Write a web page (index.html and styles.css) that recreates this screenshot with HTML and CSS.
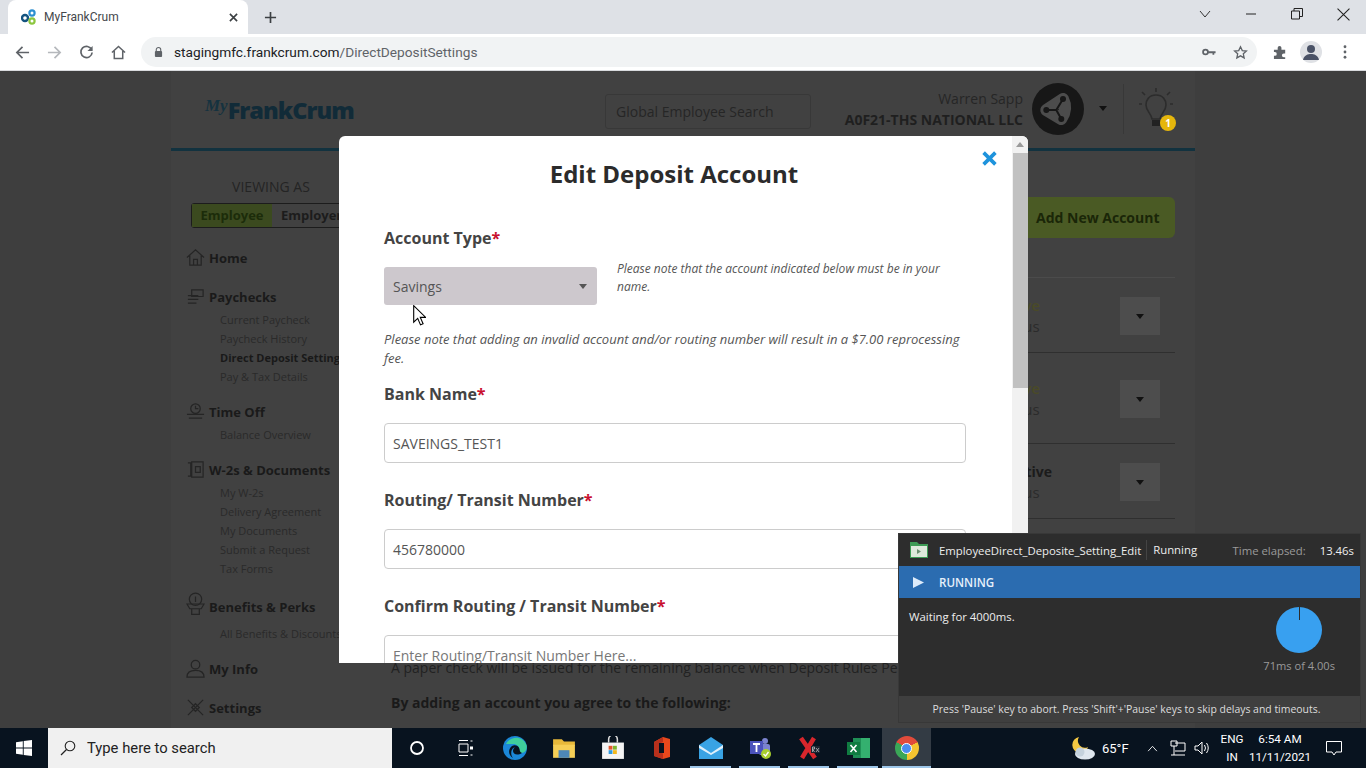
FILE: index.html
```html
<!DOCTYPE html>
<html lang="en">
<head>
<meta charset="utf-8">
<title>MyFrankCrum</title>
<link rel="stylesheet" href="styles.css">
</head>
<body>
<div class="screen">
  <div class="tabbar">
    <div class="tab">
      <svg class="favicon" viewBox="0 0 16 16"><circle cx="4" cy="9" r="3" fill="none" stroke="#14537f" stroke-width="2.4"/><circle cx="11" cy="4" r="2.6" fill="none" stroke="#2d8fd0" stroke-width="2.2"/><circle cx="11" cy="12" r="2.6" fill="none" stroke="#8cc63f" stroke-width="2.2"/></svg>
      <span class="tab-title">MyFrankCrum</span>
      <svg class="tab-close" viewBox="0 0 10 10"><path d="M1 1l8 8M9 1l-8 8" stroke="#3c4043" stroke-width="1.8"/></svg>
    </div>
    <svg class="new-tab" viewBox="0 0 14 14"><path d="M7 1v12M1 7h12" stroke="#3c4043" stroke-width="1.8"/></svg>
    <div class="win-controls">
      <svg class="wc wc-tabs" viewBox="0 0 12 12"><path d="M1 3l5 6 5-6" fill="none" stroke="#333" stroke-width="1"/></svg>
      <svg class="wc wc-min" viewBox="0 0 12 12"><path d="M1 6h10" stroke="#222" stroke-width="1"/></svg>
      <svg class="wc wc-max" viewBox="0 0 12 12"><path d="M.5 3h8v8h-8zM3 3V.5h8.500v8H8.500" fill="none" stroke="#222" stroke-width="1"/></svg>
      <svg class="wc wc-close" viewBox="0 0 12 12"><path d="M.5.500l11 11M11.500.500l-11 11" stroke="#222" stroke-width="1"/></svg>
    </div>
  </div>
  <div class="toolbar">
    <svg class="tb-icon tb-back" viewBox="0 0 16 16"><path d="M15 8H2M8 2L2 8l6 6" fill="none" stroke="#5f6368" stroke-width="1.800"/></svg>
    <svg class="tb-icon tb-fwd" viewBox="0 0 16 16"><path d="M1 8h13M8 2l6 6-6 6" fill="none" stroke="#b5b8bc" stroke-width="1.800"/></svg>
    <svg class="tb-icon tb-reload" viewBox="0 0 16 16"><path d="M13.500 5A6 6 0 1 0 14 8" fill="none" stroke="#5f6368" stroke-width="1.800"/><path d="M14.500 1v5.500H9z" fill="#5f6368"/></svg>
    <svg class="tb-icon tb-home" viewBox="0 0 16 16"><path d="M1 8l7-6.500L15 8M3.500 6.500V14.500h9V6.500" fill="none" stroke="#5f6368" stroke-width="1.600"/></svg>
    <div class="omnibox">
      <svg class="lock" viewBox="0 0 10 12"><path d="M2.500 5V3.500a2.500 2.500 0 0 1 5 0V5" fill="none" stroke="#5f6368" stroke-width="1.200"/><rect x="1" y="5" width="8" height="6.500" rx="1" fill="#5f6368"/></svg>
      <span class="url"><span class="url-host">stagingmfc.frankcrum.com</span>/DirectDepositSettings</span>
      <svg class="key" viewBox="0 0 16 10"><circle cx="4" cy="5" r="2.800" fill="none" stroke="#5f6368" stroke-width="2"/><path d="M7 4h8.500v2.500h-1.500v1.500h-2V6.500H7z" fill="#5f6368"/></svg>
      <svg class="star" viewBox="0 0 16 16"><path d="M8 1.800l1.900 4.100 4.400.5-3.300 3 .9 4.400L8 11.600l-3.900 2.200.9-4.400-3.300-3 4.400-.5z" fill="none" stroke="#5f6368" stroke-width="1.400"/></svg>
    </div>
    <svg class="puzzle" viewBox="0 0 16 16"><path d="M1 5h4V3a2 2 0 0 1 4 0v2h4v4h-1.500a2 2 0 0 0 0 4H13v2H1v-3.500h1a2 2 0 0 0 0-4H1z" fill="#5f6368"/></svg>
    <div class="profile"><svg viewBox="0 0 22 22"><circle cx="11" cy="8" r="4" fill="#4a5266"/><path d="M3 19c1-5 5-6 8-6s7 1 8 6z" fill="#4a5266"/></svg></div>
    <svg class="menu" viewBox="0 0 4 16"><circle cx="2" cy="2" r="1.600" fill="#5f6368"/><circle cx="2" cy="8" r="1.600" fill="#5f6368"/><circle cx="2" cy="14" r="1.600" fill="#5f6368"/></svg>
  </div>

  <div class="viewport">
    <div class="site">
      <header class="site-header">
        <div class="logo"><span class="logo-my">My</span><span class="logo-name">FrankCrum</span></div>
        <div class="global-search">Global Employee Search</div>
        <div class="user">
          <div class="user-name">Warren Sapp</div>
          <div class="user-company">A0F21-THS NATIONAL LLC</div>
        </div>
        <svg class="avatar" viewBox="0 0 52 52"><circle cx="26" cy="26" r="26" fill="#171717"/><path d="M14.300 27L31 16M14.300 27L29.300 36M31 16Q36 26 29.300 36" stroke="#4c4c4c" stroke-width="12" fill="none" stroke-linecap="round" stroke-linejoin="round"/><path d="M14.300 27H24.300L31 16M24.300 27L29.300 36" stroke="#171717" stroke-width="2" fill="none"/><g fill="#171717"><circle cx="14.300" cy="27" r="3"/><circle cx="31" cy="16" r="3"/><circle cx="29.300" cy="36" r="3"/></g></svg>
        <span class="caret caret-user"></span>
        <span class="header-rule"></span>
        <svg class="bulb" viewBox="0 0 36 44"><g fill="none" stroke="#2c2c2c" stroke-width="1.600"><path d="M18 8c-7 0-10 5-10 10 0 6 5 8 6 14h8c1-6 6-8 6-14 0-5-3-10-10-10z"/><path d="M18 1v4M4 5l3 3M32 5l-3 3M1 17h3M32 17h3"/></g><rect x="14" y="33" width="8" height="6" fill="#222"/></svg>
        <span class="badge">1</span>
      </header>
      <div class="site-body">
        <aside class="sidebar">
          <div class="viewing">VIEWING AS</div>
          <div class="toggle"><span class="toggle-on">Employee</span><span class="toggle-off">Employer</span></div>
          <nav class="nav">
            <div class="nav-head nav-home"><svg class="nav-icon" viewBox="0 0 20 20"><path d="M1 10l9-8 9 8M4 8v10h12V8M8 18v-6h4v6" fill="none" stroke="#252525" stroke-width="1.300"/></svg>Home</div>
            <div class="nav-head nav-pay"><svg class="nav-icon" viewBox="0 0 20 20"><path d="M6 3h12v7H6zM2 9h11M2 13h11M2 17h9" fill="none" stroke="#252525" stroke-width="1.300"/></svg>Paychecks</div>
            <a class="nav-sub">Current Paycheck</a>
            <a class="nav-sub">Paycheck History</a>
            <a class="nav-sub nav-current">Direct Deposit Settings</a>
            <a class="nav-sub">Pay &amp; Tax Details</a>
            <div class="nav-head nav-time"><svg class="nav-icon" viewBox="0 0 20 20"><circle cx="10" cy="7" r="5" fill="none" stroke="#252525" stroke-width="1.300"/><path d="M1 13h18M3 17h14M10 4v3h3" fill="none" stroke="#252525" stroke-width="1.300"/></svg>Time Off</div>
            <a class="nav-sub">Balance Overview</a>
            <div class="nav-head nav-w2"><svg class="nav-icon" viewBox="0 0 20 20"><path d="M2 3h3v14H2M6 2h12v16H6zM10 7h5v6h-5z" fill="none" stroke="#252525" stroke-width="1.300"/></svg>W-2s &amp; Documents</div>
            <a class="nav-sub">My W-2s</a>
            <a class="nav-sub">Delivery Agreement</a>
            <a class="nav-sub">My Documents</a>
            <a class="nav-sub">Submit a Request</a>
            <a class="nav-sub">Tax Forms</a>
            <div class="nav-head nav-ben"><svg class="nav-icon nav-icon-tall" viewBox="0 0 20 26"><circle cx="10" cy="8" r="6.500" fill="none" stroke="#252525" stroke-width="1.300"/><path d="M1 13h18l-3 5H4zM6 18v6h8v-6M10 5v6" fill="none" stroke="#252525" stroke-width="1.300"/></svg>Benefits &amp; Perks</div>
            <a class="nav-sub nav-sub-ben">All Benefits &amp; Discounts</a>
            <div class="nav-head nav-info"><svg class="nav-icon" viewBox="0 0 20 20"><circle cx="10" cy="6" r="4.500" fill="none" stroke="#252525" stroke-width="1.300"/><path d="M1 19c0-5 4-7 9-7s9 2 9 7z" fill="none" stroke="#252525" stroke-width="1.300"/></svg>My Info</div>
            <div class="nav-head nav-set"><svg class="nav-icon" viewBox="0 0 20 20"><path d="M2 2l16 16M18 2L2 18M10 6l4 4-4 4-4-4z" fill="none" stroke="#252525" stroke-width="1.300"/></svg>Settings</div>
          </nav>
        </aside>
        <main class="main">
          <div class="main-actions"><span class="add-btn">Add New Account</span></div>
          <div class="acct-list">
            <div class="acct acct-1"><div class="acct-text"><div class="acct-state">Active</div><div class="acct-status">Status</div></div><span class="acct-btn"><span class="caret"></span></span></div>
            <div class="acct acct-2"><div class="acct-text"><div class="acct-state">Active</div><div class="acct-status">Status</div></div><span class="acct-btn"><span class="caret"></span></span></div>
            <div class="acct acct-3"><div class="acct-text"><div class="acct-state acct-inactive">Inactive</div><div class="acct-status">Status</div></div><span class="acct-btn"><span class="caret"></span></span></div>
          </div>
          <p class="paper">A paper check will be issued for the remaining balance when Deposit Rules Per Paycheck are not met.</p>
          <p class="agree">By adding an account you agree to the following:</p>
        </main>
      </div>
    </div>

    <div class="modal">
      <div class="modal-body">
        <h1 class="modal-title">Edit Deposit Account</h1>
        <svg class="modal-close" viewBox="0 0 14 14"><path d="M1.500 1.500l11 11M12.500 1.500l-11 11" stroke="#1e93dc" stroke-width="3.400"/></svg>
        <div class="label label-type">Account Type<span class="req">*</span></div>
        <div class="type-row">
          <div class="select">Savings<span class="caret caret-select"></span></div>
          <p class="note note-side">Please note that the account indicated below must be in your name.</p>
        </div>
        <p class="note note-full">Please note that adding an invalid account and/or routing number will result in a $7.00 reprocessing fee.</p>
        <div class="label">Bank Name<span class="req">*</span></div>
        <div class="input">SAVEINGS_TEST1</div>
        <div class="label">Routing/ Transit Number<span class="req">*</span></div>
        <div class="input">456780000</div>
        <div class="label">Confirm Routing / Transit Number<span class="req">*</span></div>
        <div class="input input-ph">Enter Routing/Transit Number Here...</div>
      </div>
      <div class="scrollbar">
        <svg class="sb-up" viewBox="0 0 8 5"><path d="M4 0l4 5H0z" fill="#9a9a9a"/></svg>
        <div class="sb-thumb"></div>
      </div>
    </div>

    <svg class="cursor" viewBox="0 0 13 21"><path d="M.700.700v16.500l4-3.800 2.800 6.500 2.600-1.100-2.800-6.400h5.400z" fill="#fff" stroke="#000" stroke-width="1.100"/></svg>

    <section class="runner">
      <div class="run-title">
        <svg class="run-icon" viewBox="0 0 18 16"><path d="M0 0h7l2 2h9v14H0z" fill="#3e9b55"/><rect x="1" y="4" width="16" height="11" fill="#dfe9dc"/><path d="M7 7l4 2.500L7 12z" fill="#6d8f72"/></svg>
        <span class="run-name">EmployeeDirect_Deposite_Setting_Edit</span>
        <span class="run-state">Running</span>
        <span class="run-elapsed">Time elapsed:</span>
        <span class="run-time">13.46s</span>
      </div>
      <div class="run-bar"><svg class="run-play" viewBox="0 0 12 12"><path d="M0 0l12 6-12 6z" fill="#dcebfa"/></svg>RUNNING</div>
      <div class="run-body">
        <div class="run-msg">Waiting for 4000ms.</div>
        <div class="run-progress">
          <div class="pie"></div>
          <div class="pie-label">71ms of 4.00s</div>
        </div>
      </div>
      <div class="run-foot">Press 'Pause' key to abort. Press 'Shift'+'Pause' keys to skip delays and timeouts.</div>
    </section>
  </div>

  <footer class="taskbar">
    <div class="start"><svg viewBox="0 0 16 16"><path d="M0 2.200L6.800 1.200V7.500H0zM7.700 1.100L16 0v7.500H7.700zM0 8.400h6.800v6.400L0 13.800zM7.700 8.400H16V16l-8.300-1.100z" fill="#fff"/></svg></div>
    <div class="search">
      <svg class="search-icon" viewBox="0 0 16 16"><circle cx="10" cy="6" r="4.800" fill="none" stroke="#222" stroke-width="1.100"/><path d="M6.500 9.500L1 15" stroke="#222" stroke-width="1.200"/></svg>
      <span>Type here to search</span>
    </div>
    <div class="tasks">
      <div class="task"><svg class="ti" viewBox="0 0 16 16"><circle cx="8" cy="8" r="6" fill="none" stroke="#fff" stroke-width="1.800"/></svg></div>
      <div class="task"><svg class="ti" viewBox="0 0 16 16"><path d="M1 .500h9M1 15.500h9M1 4h9v8H1zM12.500 1h2M12.500 15h2" fill="none" stroke="#fff" stroke-width="1"/><rect x="12" y="6.500" width="3" height="3" fill="#fff"/></svg></div>
      <div class="task"><svg class="ti ti-big" viewBox="0 0 24 24"><circle cx="12" cy="12" r="12" fill="#1b87d8"/><path d="M3 8C6 1 19-2 23.500 9c1 5-1.500 8-5 8-2 0-3-1-3-2 2-3-1-7-5-7-3 0-6 0-7.500 0z" fill="#3fcf9c"/><path d="M10 22c-5-3-5-9-1-12 3-2 7 0 7.500 3 .3 2 .5 3 2.500 4-5 3-9 1-9-2 0-2 1-3 2-3.500-4 0-5 7-2 10.500z" fill="#08131f"/></svg></div>
      <div class="task"><svg class="ti ti-big" viewBox="0 0 22 22"><path d="M1 3h8l2 2h10v4H1z" fill="#e8b93a"/><rect x="1" y="8" width="20" height="12" fill="#f6cf56"/><rect x="6" y="13" width="10" height="7" fill="#4d87b8"/></svg></div>
      <div class="task"><svg class="ti ti-big" viewBox="0 0 22 22"><path d="M7 6V3a4 4 0 0 1 8 0v3" fill="none" stroke="#ddd" stroke-width="1.400"/><rect x="1" y="6" width="20" height="15" fill="#f4f4f4"/><rect x="7" y="9" width="3.500" height="3.500" fill="#e2552c"/><rect x="11" y="9" width="3.500" height="3.500" fill="#7cb52e"/><rect x="7" y="13" width="3.500" height="3.500" fill="#2f9ae0"/><rect x="11" y="13" width="3.500" height="3.500" fill="#f3b81c"/></svg></div>
      <div class="task"><svg class="ti ti-big" viewBox="0 0 24 24"><path d="M13 1l7 2v18l-7 2-9-3V6z" fill="#e8481c"/><path d="M4 6l9-5v5L9 8v8l4 1.500V23l-9-3z" fill="#b8301c"/><rect x="9" y="7" width="5" height="10" fill="#08131f"/></svg></div>
      <div class="task task-open"><svg class="ti ti-big" viewBox="0 0 24 22"><path d="M0 8l12-8 12 8v14H0z" fill="#39a3e4"/><path d="M0 8l12 8 12-8v3l-12 7-12-7z" fill="#dff0fb"/></svg></div>
      <div class="task task-open"><svg class="ti ti-big" viewBox="0 0 24 24"><circle cx="17" cy="5" r="3" fill="#7b83cf"/><rect x="11" y="8" width="11" height="11" rx="2" fill="#7b83cf"/><rect x="2" y="5" width="13" height="13" fill="#4b53bc"/><path d="M5 8h7M8.500 8v8" stroke="#fff" stroke-width="1.800"/><circle cx="18" cy="18" r="5" fill="#a8cf2e"/><path d="M15.500 18l2 2 3-4" fill="none" stroke="#fff" stroke-width="1.300"/></svg></div>
      <div class="task task-open"><svg class="ti ti-big" viewBox="0 0 24 24"><path d="M4 2l14 20M17 2L5 22" stroke="#d8262c" stroke-width="4.500"/><rect x="14" y="10" width="9" height="7" fill="#1b2430"/><path d="M15.500 11v5M15.500 11h2v2h-2l2 3M19 12l3 4M22 12l-3 4" stroke="#bbb" stroke-width=".8" fill="none"/></svg></div>
      <div class="task task-open"><svg class="ti ti-big" viewBox="0 0 24 24"><rect x="7" y="2" width="17" height="20" fill="#1f8f56"/><rect x="15" y="2" width="9" height="20" fill="#34b06f"/><rect x="1" y="6" width="13" height="13" fill="#107c41"/><path d="M4.500 9l6 7M10.500 9l-6 7" stroke="#fff" stroke-width="1.600"/></svg></div>
      <div class="task task-open task-active"><div class="chrome"><div class="chrome-dot"></div></div></div>
    </div>
    <div class="tray">
      <svg class="weather" viewBox="0 0 26 24"><path d="M9 1a8 8 0 1 0 9 10A7 7 0 0 1 9 1z" fill="#f5c842"/><ellipse cx="15" cy="18" rx="10" ry="5.500" fill="#dfe7ef"/><circle cx="10" cy="16" r="4.500" fill="#c5d2dd"/></svg>
      <span class="temp">65°F</span>
      <svg class="tray-i tray-chev" viewBox="0 0 12 8"><path d="M1 7l5-5.500L11 7" fill="none" stroke="#fff" stroke-width="1"/></svg>
      <svg class="tray-i tray-net" viewBox="0 0 16 16"><path d="M1 1h6v5H1zM4 6v9M1 15h14M5 3h10v8H5" fill="none" stroke="#fff" stroke-width="1"/></svg>
      <svg class="tray-i tray-vol" viewBox="0 0 16 16"><path d="M1 6h3l4-4v12l-4-4H1zM10.500 5q2 3 0 6M12.500 3q3.500 5 0 10" fill="none" stroke="#fff" stroke-width="1"/></svg>
      <div class="lang"><div>ENG</div><div>IN</div></div>
      <div class="clock"><div>6:54 AM</div><div>11/11/2021</div></div>
      <svg class="notif" viewBox="0 0 16 16"><path d="M.500 1.500h15v10.500H10l-2 3-2-3H.500z" fill="none" stroke="#fff" stroke-width="1"/></svg>
    </div>
  </footer>
</div>
</body>
</html>
```
FILE: styles.css
```css
* { box-sizing: border-box; }
html, body { margin: 0; padding: 0; }
body { font-family: "Open Sans", "Noto Sans", sans-serif; overflow: hidden; }
p, h1 { margin: 0; }
.screen { width: 1366px; height: 768px; display: flex; flex-direction: column; overflow: hidden; }

/* browser chrome */
.tabbar { height: 34px; background: #dee1e6; display: flex; align-items: flex-end; flex: none; }
.tab { width: 240px; height: 34px; margin-left: 8px; background: #fff; border-radius: 8px 8px 0 0; display: flex; align-items: center; padding: 0 10px 0 13px; }
.favicon { width: 16px; height: 16px; }
.tab-title { margin-left: 7px; font: 12px Roboto, sans-serif; color: #45484c; flex: 1; }
.tab-close { width: 9px; height: 9px; }
.new-tab { width: 13px; height: 13px; margin: 0 0 10px 16px; }
.win-controls { margin-left: auto; height: 34px; display: flex; align-items: center; }
.wc { width: 12px; height: 12px; margin-top: -6px; }
.wc-tabs { margin-right: 34px; }
.wc-min { margin-right: 34px; }
.wc-max { margin-right: 34px; }
.wc-close { width: 13px; height: 13px; margin-right: 16px; }
.toolbar { height: 37px; background: #fff; border-bottom: 1px solid #d8dadd; display: flex; align-items: center; flex: none; padding-left: 15px; }
.tb-icon { width: 15px; height: 15px; flex: none; }
.tb-fwd { margin-left: 17px; }
.tb-reload { margin-left: 17px; }
.tb-home { margin-left: 17px; }
.omnibox { width: 1116px; height: 30px; margin-left: 15px; background: #f1f3f4; border-radius: 15px; display: flex; align-items: center; padding-left: 13px; }
.lock { width: 9px; height: 12px; }
.url { margin-left: 11px; font: 13.700px Roboto, sans-serif; color: #5f6368; flex: 1; }
.url-host { color: #202124; }
.key { width: 14px; height: 10px; margin-right: 17px; }
.star { width: 15px; height: 15px; margin-right: 9px; }
.puzzle { width: 15px; height: 15px; margin-left: 16px; }
.profile { width: 22px; height: 22px; margin-left: 12px; border-radius: 50%; background: #dfe1e5; }
.profile svg { display: block; }
.menu { width: 4px; height: 14px; margin-left: 21px; }

/* dimmed page */
.viewport { position: relative; flex: 1; min-height: 0; background: #3e3e3e; overflow: hidden; }
.site { width: 1024px; height: 100%; margin: 0 auto; background: #414141; overflow: hidden; }
.site-header { height: 80px; border-bottom: 3px solid #12323f; display: flex; align-items: center; padding: 0 0 2px 34px; position: relative; }
.logo { width: 400px; height: 30px; display: flex; align-items: center; margin-top: 2px; }
.logo-my { font: italic 700 17px "Liberation Serif", serif; color: #15323f; margin-top: -7px; }
.logo-name { font: 800 23.500px "Open Sans", sans-serif; letter-spacing: -1px; color: #112b38; }
.global-search { width: 206px; height: 35px; margin-top: 5px; border: 1px solid #383838; border-radius: 3px; padding-left: 10px; font-size: 14px; line-height: 33px; color: #262626; }
.user { width: 212px; text-align: right; color: #262626; }
.user-name { font-size: 14px; line-height: 21px; }
.user-company { font-size: 14px; line-height: 21px; font-weight: 700; color: #1f1f1f; white-space: nowrap; }
.avatar { width: 52px; height: 52px; margin-left: 9px; }
.caret { display: inline-block; width: 0; height: 0; border-left: 4.500px solid transparent; border-right: 4.500px solid transparent; border-top: 5px solid #111; }
.caret-user { margin-left: 15px; }
.caret-select { border-top-color: #555; }
.header-rule { width: 1px; height: 50px; margin-left: 16px; background: #383838; }
.bulb { width: 36px; height: 44px; margin-left: 14px; }
.badge { position: absolute; left: 989px; top: 44px; width: 16px; height: 16px; border-radius: 50%; background: #e5b60c; color: #fff; font-size: 10px; font-weight: 700; line-height: 16px; text-align: center; }
.site-body { display: flex; height: 577px; }
.sidebar { width: 200px; flex: none; padding: 26px 0 0 15px; color: #1e1e1e; }
.viewing { width: 170px; text-align: center; font-size: 14px; line-height: 20px; color: #242424; }
.toggle { width: 200px; height: 25px; margin: 6px 0 0 5px; border: 1px solid #1c1c1c; border-radius: 3px; display: flex; font-size: 13px; font-weight: 700; line-height: 23px; }
.toggle-on { width: 80px; background: #3b4a1f; color: #1c2c0a; text-align: center; }
.toggle-off { padding-left: 9px; color: #1c1c1c; white-space: nowrap; }
.nav { display: flex; flex-direction: column; white-space: nowrap; }
.nav-head { display: flex; align-items: center; height: 20px; font-size: 13px; font-weight: 700; color: #1a1a1a; position: relative; padding-left: 23px; }
.nav-icon { position: absolute; left: 0; top: 0; width: 19px; height: 19px; }
.nav-icon-tall { top: -6px; height: 26px; }
.nav-home { margin-top: 20px; }
.nav-pay { margin-top: 19px; }
.nav-time { margin-top: 16px; }
.nav-w2 { margin-top: 16px; }
.nav-ben { margin-top: 19px; }
.nav-info { margin-top: 16px; }
.nav-set { margin-top: 19px; }
.nav-sub { display: block; height: 19px; padding-left: 34px; font-size: 11px; line-height: 19px; color: #2a2a2a; }
.nav-head + .nav-sub { margin-top: 3px; }
.nav-current { font-weight: 700; color: #191919; }
.nav-ben + .nav-sub-ben { margin-top: 7px; }

.main { flex: 1; min-width: 0; padding: 0 20px 0 20px; }
.main-actions { display: flex; justify-content: flex-end; padding-top: 46px; }
.add-btn { width: 170px; height: 41px; padding-left: 31px; border-radius: 6px; background: #4a5a24; color: #1a2608; font-size: 14px; font-weight: 700; line-height: 41px; }
.acct-list { margin-top: 39px; border-top: 1px solid #4b4b4b; }
.acct { display: flex; align-items: center; padding-top: 2px; border-bottom: 1px solid #2f2f2f; }
.acct-1 { height: 75px; }
.acct-2 { height: 91px; }
.acct-3 { height: 75px; }
.acct-text { width: 649px; padding-left: 605px; white-space: nowrap; }
.acct-state { font-size: 15px; line-height: 21px; font-weight: 600; color: #4a4a28; }
.acct-inactive { font-size: 14px; font-weight: 700; color: #1b1b1b; }
.acct-status { font-size: 15px; line-height: 21px; color: #2b2b2b; }
.acct-btn { width: 40px; height: 38px; margin-left: 80px; background: #4d4d4d; display: flex; align-items: center; justify-content: center; }
.paper { margin-top: 139px; font-size: 14px; line-height: 20px; color: #222; white-space: nowrap; }
.agree { margin-top: 15px; font-size: 14px; line-height: 20px; font-weight: 700; color: #1a1a1a; }

/* modal */
.modal { position: absolute; left: 339px; top: 65px; width: 689px; height: 527px; background: #fff; border-radius: 6px 6px 0 0; display: flex; overflow: hidden; }
.modal-body { flex: 1; min-width: 0; padding: 19px 48px 0 45px; position: relative; overflow: hidden; color: #444; }
.modal-title { font-size: 24px; line-height: 36px; font-weight: 700; text-align: center; color: #2b2b2b; margin-top: 1px; }
.modal-close { position: absolute; left: 643px; top: 15px; width: 15px; height: 15px; }
.label { margin-top: 25px; font-size: 16px; line-height: 24px; font-weight: 700; color: #444; }
.label-type { margin-top: 34px; }
.req { color: #c8102e; }
.type-row { margin-top: 10px; display: flex; height: 45px; }
.select { width: 213px; height: 38px; margin-top: 7px; padding-left: 9px; flex: none; background: #cdc8cd; border-radius: 3px; display: flex; align-items: center; justify-content: space-between; padding-right: 10px; font-size: 14px; color: #555; }
.note { font-size: 12px; font-style: italic; line-height: 18px; color: #555; }
.note-side { margin-left: 20px; width: 345px; }
.note-full { margin-top: 25px; line-height: 19px; font-size: 13px; margin-bottom: -11px; }
.input { margin-top: 17px; width: 582px; height: 40px; border: 1px solid #ccc; border-radius: 4px; padding-left: 8px; font-size: 14px; line-height: 39px; color: #555; flex: none; }
.input-ph { color: #777; }
.scrollbar { width: 16px; flex: none; background: #f1f1f1; padding-top: 17px; position: relative; }
.sb-thumb { width: 15px; height: 235px; margin-left: 1px; background: #c1c1c1; }
.sb-up { position: absolute; left: 4px; top: 6px; width: 8px; height: 5px; }

.cursor { position: absolute; left: 413px; top: 234px; width: 13px; height: 21px; }

/* automation panel */
.runner { position: absolute; left: 899px; top: 463px; width: 461px; height: 188px; background: #2d2d2d; display: flex; flex-direction: column; color: #eee; font-family: "Open Sans", sans-serif; font-size: 11.350px; box-shadow: 0 0 0 1px #383838; }
.run-title { height: 32px; flex: none; display: flex; align-items: center; padding: 0 6px 0 11px; }
.run-icon { width: 18px; height: 16px; }
.run-name { margin-left: 11px; }
.run-state { margin-left: 5px; padding-left: 6px; border-left: 1px solid #444; line-height: 20px; }
.run-elapsed { margin-left: auto; margin-right: -1px; color: #9b9b9b; }
.run-time { margin-left: 15px; }
.run-bar { height: 32px; flex: none; background: #2b6cb0; display: flex; align-items: center; padding-left: 14px; font-weight: 600; color: #e6f0fa; font-size: 11.600px; }
.run-play { width: 11px; height: 11px; margin-right: 15px; }
.run-body { flex: 1; display: flex; justify-content: space-between; padding: 10px 25px 0 10px; }
.run-msg { line-height: 18px; }
.run-progress { display: flex; flex-direction: column; align-items: center; }
.pie { width: 46px; height: 46px; margin-top: -1px; border-radius: 50%; background: conic-gradient(#2d2d2d 0 3deg, #38a0f0 3deg 360deg); }
.pie-label { margin-top: 5px; line-height: 16px; color: #9a9a9a; font-size: 11.100px; }
.run-foot { height: 26px; flex: none; background: #3f3f3f; font-size: 10.450px; line-height: 26px; text-align: center; color: #ddd; padding-right: 6px; }

/* taskbar */
.taskbar { height: 40px; flex: none; background: #08131f; display: flex; position: relative; }
.start { width: 48px; display: flex; align-items: center; justify-content: center; }
.start svg { width: 16px; height: 16px; }
.search { width: 344px; background: #f0f0f0; display: flex; align-items: center; padding-left: 12px; color: #222; font: 14.800px Roboto, sans-serif; }
.search-icon { width: 16px; height: 16px; margin-right: 11px; }
.tasks { display: flex; }
.task { width: 49px; display: flex; align-items: center; justify-content: center; position: relative; }
.task-open::after { content: ""; position: absolute; left: 4px; right: 4px; bottom: 0; height: 2px; background: #9cc5e8; }
.task-active { background: #333b44; }
.task-active::after { left: 0; right: 0; }
.ti { width: 16px; height: 16px; }
.ti-big { width: 24px; height: 24px; }
.chrome { width: 24px; height: 24px; border-radius: 50%; background: conic-gradient(from -60deg, #e14b3b 0 120deg, #f4c430 120deg 240deg, #3aa757 240deg); display: flex; align-items: center; justify-content: center; }
.chrome-dot { width: 11px; height: 11px; border-radius: 50%; background: #4a8df0; border: 1.500px solid #fff; }
.tray { flex: 1; display: flex; align-items: center; color: #fff; font: 11.700px Roboto, sans-serif; }
.weather { width: 26px; height: 24px; margin-left: 139px; flex: none; }
.temp { margin-left: 6px; font-size: 13px; width: 27px; white-space: nowrap; }
.tray-i { flex: none; }
.tray-chev { width: 11px; height: 7px; margin-left: 18px; }
.tray-net { width: 16px; height: 16px; margin-left: 12px; }
.tray-vol { width: 16px; height: 16px; margin-left: 8px; }
.lang { margin-left: 7px; width: 30px; text-align: center; line-height: 18px; }
.clock { width: 66px; text-align: center; line-height: 18px; }
.notif { width: 16px; height: 16px; margin-left: 13px; flex: none; }
```
